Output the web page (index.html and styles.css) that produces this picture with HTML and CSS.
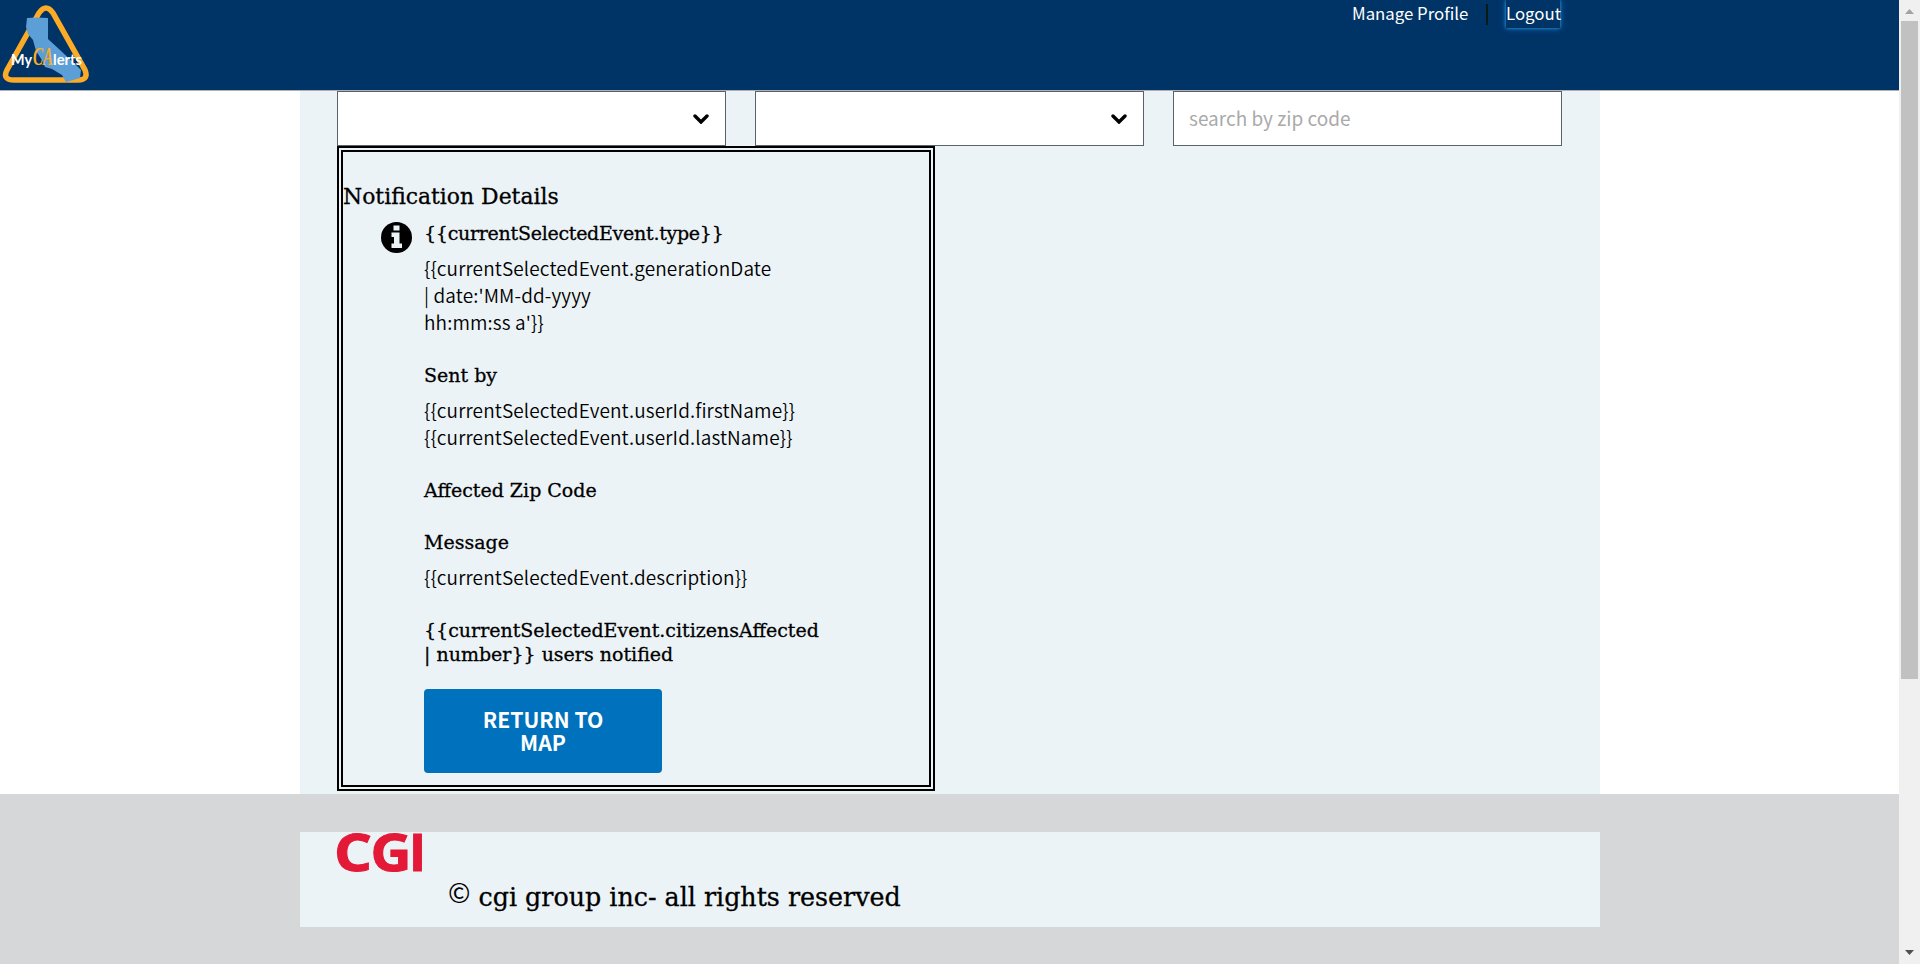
FILE: index.html
```html
<!DOCTYPE html>
<html lang="en">
<head>
<meta charset="utf-8">
<title>MyCAlerts</title>
<link rel="stylesheet" href="styles.css">
</head>
<body>
<div class="window">
  <div class="page">
    <header class="header">
      <svg class="logo" width="92" height="90" viewBox="0 0 92 90" role="img" aria-label="MyCAlerts">
        <path d="M39 13Q46 3 53 13L85 70Q89 80 78 80H14Q2 80 7 70Z" fill="none" stroke="#fbab25" stroke-width="5.5"/>
        <path d="M27 18L36 17.500 48 18V39L60 50 77 66 81 70 80 78 73 80 66 82 62 75 52 69 45 67 42 60 36 51 33 40 28 34 26 27Z" fill="#5c9fd6"/>
        <text class="logo-sans" x="11" y="65" textLength="21" lengthAdjust="spacingAndGlyphs">My</text>
        <text class="logo-script" x="33" y="65" textLength="20" lengthAdjust="spacingAndGlyphs">CA</text>
        <text class="logo-sans" x="53" y="65" textLength="29" lengthAdjust="spacingAndGlyphs">lerts</text>
      </svg>
      <nav class="nav">
        <a class="nav-link profile">Manage Profile</a>
        <span class="divider"></span>
        <a class="nav-link logout">Logout</a>
      </nav>
    </header>
    <main class="main">
      <div class="filters">
        <div class="field"><svg class="chevron" width="16" height="10" viewBox="0 0 16 10"><path d="M2 2L8 8L14 2" fill="none" stroke="#000" stroke-width="3.400" stroke-linecap="round"/></svg></div>
        <div class="field"><svg class="chevron" width="16" height="10" viewBox="0 0 16 10"><path d="M2 2L8 8L14 2" fill="none" stroke="#000" stroke-width="3.400" stroke-linecap="round"/></svg></div>
        <div class="field"><span class="placeholder">search by zip code</span></div>
      </div>
      <section class="card">
        <h3 class="card-title">Notification Details</h3>
        <div class="event">
          <svg class="info" width="31" height="31" viewBox="0 0 31 31"><circle cx="15.500" cy="15.500" r="15.500"/><path d="M12.500 3.500h6v5h-6zM10.500 10.500h8v11h2.500v4.500H10.500v-4.500H13v-6.500h-2.500z" fill="#ecf3f7"/></svg>
          <div class="details">
            <h4 class="label type">{{currentSelectedEvent.type}}</h4>
            <p class="value">{{currentSelectedEvent.generationDate<br>| date:'MM-dd-yyyy<br>hh:mm:ss a'}}</p>
            <h4 class="label">Sent by</h4>
            <p class="value">{{currentSelectedEvent.userId.firstName}}<br>{{currentSelectedEvent.userId.lastName}}</p>
            <h4 class="label solo">Affected Zip Code</h4>
            <h4 class="label">Message</h4>
            <p class="value">{{currentSelectedEvent.description}}</p>
            <h4 class="label">{{currentSelectedEvent.citizensAffected<br>| number}} users notified</h4>
            <button class="button">RETURN TO<br>MAP</button>
          </div>
        </div>
      </section>
    </main>
    <footer class="footer">
      <div class="footer-box">
        <svg class="cgi" width="86" height="40" viewBox="0 0 86 40">
          <text class="cgi-text" x="-3" y="38.500" textLength="38" lengthAdjust="spacingAndGlyphs">C</text>
          <text class="cgi-text" x="33.500" y="38.500" textLength="41" lengthAdjust="spacingAndGlyphs">G</text>
          <text class="cgi-text" x="72" y="38.500">I</text>
        </svg>
        <p class="copyright"><span class="copy-sign">©</span> cgi group inc- all rights reserved</p>
      </div>
    </footer>
  </div>
  <div class="scrollbar">
    <svg width="9" height="5" viewBox="0 0 9 5"><path d="M0 5L4.500 0L9 5Z" fill="#a3a3a3"/></svg>
    <div class="thumb"></div>
    <svg class="down" width="9" height="5" viewBox="0 0 9 5"><path d="M0 0H9L4.500 5Z" fill="#505050"/></svg>
  </div>
</div>
</body>
</html>
```
FILE: styles.css
```css
* { box-sizing: border-box; }
body {
  margin: 0;
  font-family: "Noto Sans CJK SC", "Open Sans", sans-serif;
  color: #000;
}
h3, h4, p { margin: 0; white-space: nowrap; }
.window { display: flex; height: 964px; overflow: hidden; }
.page { width: 1899px; display: flex; flex-direction: column; background: #fff; }
.header {
  height: 91px;
  flex: none;
  display: flex;
  justify-content: space-between;
  background: #003366;
  border-bottom: 1px solid #aeb0b5;
}
.logo-sans { font: bold 16px Lato, sans-serif; fill: #fff; }
.logo-script { font: italic bold 25px "Liberation Serif", serif; fill: #fbab25; }
.nav { display: flex; align-items: flex-start; margin-right: 339px; }
.nav-link { color: #fff; font-size: 16.800px; line-height: 26px; white-space: nowrap; }
.profile { width: 116px; }
.divider { width: 2px; height: 21px; margin: 4px 18px 0; background: #0a1a14; }
.logout { width: 54px; height: 28px; box-shadow: 0 0 3px #3e94cf, 0 0 7px #0071bc; background: #003366; }
.main { width: 1300px; height: 703px; flex: none; margin-left: 300px; padding: 0 38px 0 37px; background: #ecf3f7; }
.filters { display: flex; gap: 29px; }
.field {
  flex: 1;
  height: 55px;
  display: flex;
  align-items: center;
  padding: 0 16px 0 15px;
  background: #fff;
  border: 1px solid #5b616b;
}
.chevron { margin-left: auto; }
.placeholder { color: #aaa; font-size: 19px; white-space: nowrap; padding-bottom: 2px; }
.card { width: 598px; height: 645px; border: 6px double #000; }
.card-title, .label, .copyright {
  font-family: "DejaVu Serif", serif;
  font-weight: 400;
  -webkit-text-stroke: 0.3px #000;
}
.card-title { font-size: 21.900px; line-height: 30px; padding-top: 30px; }
.event { display: flex; gap: 12px; padding: 9px 0 0 38px; }
.info { margin-top: 1px; flex: none; }
.details { flex: 1; }
.label { font-size: 19px; line-height: 24px; }
.type { letter-spacing: -0.270px; }
.value { font-size: 19px; font-weight: 350; letter-spacing: 0.130px; line-height: 27px; margin: 9px 0 28px; }
.solo { margin-bottom: 28px; }
.button {
  display: block;
  width: 238px;
  height: 84px;
  margin-top: 23px;
  padding: 0 0 2px;
  border: 0;
  border-radius: 4px;
  background: #0071bc;
  color: #fff;
  font: 700 21.200px/23px "Noto Sans CJK SC", sans-serif;
}
.footer { flex: 1; padding: 38px 0 0 300px; background: #d6d7d9; }
.footer-box { width: 1300px; height: 95px; padding-left: 37px; background: #ecf3f7; }
.cgi { display: block; overflow: visible; }
.cgi-text { font: 700 51.500px "Open Sans", sans-serif; fill: #e31937; stroke: #e31937; stroke-width: 1px; }
.copyright { font-size: 25.350px; line-height: 34px; padding: 8px 0 0 111px; }
.copy-sign { font-size: 27px; font-family: "Noto Sans CJK SC", sans-serif; line-height: 20px; vertical-align: 3px; -webkit-text-stroke: 0; }
.scrollbar {
  width: 21px;
  display: flex;
  flex-direction: column;
  align-items: center;
  padding: 9px 0;
  background: #f0f0f0;
}
.thumb { width: 17px; height: 658px; margin-top: 7px; background: #c1c1c1; }
.down { margin-top: auto; }
```
